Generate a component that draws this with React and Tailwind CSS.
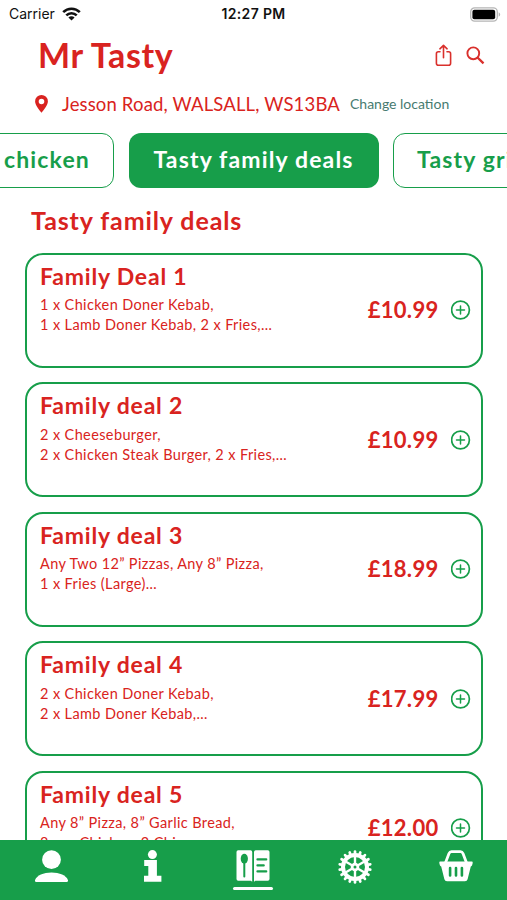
const categories = [
  { name: "chicken", className: "w-[230px] justify-end border border-[#179e4a] pr-[23px] text-[#179e4a]" },
  { name: "Tasty family deals", className: "w-[250px] justify-center bg-[#179e4a] text-white" },
  { name: "Tasty grills", className: "w-[180px] border border-[#179e4a] pl-[23px] text-[#179e4a]" },
];

const deals = [
  { name: "Family Deal 1", lines: ["1 x Chicken Doner Kebab,", "1 x Lamb Doner Kebab, 2 x Fries,…"], price: "£10.99" },
  { name: "Family deal 2", lines: ["2 x Cheeseburger,", "2 x Chicken Steak Burger, 2 x Fries,…"], price: "£10.99" },
  { name: "Family deal 3", lines: ["Any Two 12” Pizzas, Any 8” Pizza,", "1 x Fries (Large)…"], price: "£18.99" },
  { name: "Family deal 4", lines: ["2 x Chicken Doner Kebab,", "2 x Lamb Doner Kebab,…"], price: "£17.99" },
  { name: "Family deal 5", lines: ["Any 8” Pizza, 8” Garlic Bread,", "8 pcs Chicken, 2 Chips,…"], price: "£12.00" },
];

function WifiIcon() {
  return (
    <svg className="ml-[7px] h-[14px] w-[19px]" viewBox="0 0 19 14" fill="none" stroke="#111" strokeWidth="2.6">
      <path d="M1.2 5.2a11.8 11.8 0 0 1 16.6 0" />
      <path d="M4.3 8.4a7.4 7.4 0 0 1 10.4 0" />
      <path d="M9.5 13.6 6.4 10.5a4.4 4.4 0 0 1 6.2 0z" fill="#111" stroke="none" />
    </svg>
  );
}

function BatteryIcon() {
  return (
    <svg className="h-[15px] w-[31px]" viewBox="0 0 31 15">
      <rect x="0.7" y="0.9" width="26.6" height="13.2" rx="4" fill="#fff" stroke="#b5b5b5" strokeWidth="1.3" />
      <rect x="2.4" y="2.8" width="22.8" height="9.5" rx="2" fill="#000" />
      <path d="M28.7 5.3c2 .8 2 3.6 0 4.4z" fill="#b5b5b5" />
    </svg>
  );
}

function ShareIcon() {
  return (
    <svg className="h-[23px] w-[17px]" viewBox="0 0 17 23" fill="none" stroke="#d9302c" strokeWidth="1.6" strokeLinecap="round" strokeLinejoin="round">
      <path d="M5 7.800H3.400a2 2 0 0 0-2 2v9.400a2 2 0 0 0 2 2h10.200a2 2 0 0 0 2-2V9.800a2 2 0 0 0-2-2H12" />
      <path d="M8.5 13.7V1.6M4.900 4.800l3.600-3.400 3.600 3.400" />
    </svg>
  );
}

function SearchIcon() {
  return (
    <svg className="h-[19px] w-[19px]" viewBox="0 0 19 19" fill="none" stroke="#d9302c">
      <circle cx="7.3" cy="7.3" r="5.9" strokeWidth="1.9" />
      <path d="m11.5 11.5 6 5.8" strokeWidth="2.4" />
    </svg>
  );
}

function PinIcon() {
  return (
    <svg className="h-[18px] w-[13px]" viewBox="0 0 13 18">
      <path
        d="M6.5 0A6.4 6.4 0 0 0 .1 6.4C.1 9.5 4 14.6 6.5 17.8c2.5-3.2 6.4-8.3 6.4-11.4A6.4 6.4 0 0 0 6.5 0zm0 3.7a2.8 2.8 0 1 1 0 5.6 2.8 2.8 0 0 1 0-5.6z"
        fill="#d92320"
        fillRule="evenodd"
      />
    </svg>
  );
}

function PlusIcon() {
  return (
    <svg className="h-5 w-5" viewBox="0 0 20 20" fill="none" stroke="#179e4a" strokeLinecap="round">
      <circle cx="9.500" cy="10" r="8.900" strokeWidth="1.7" />
      <path d="M9.500 6v8M5.500 10h8" strokeWidth="1.5" />
    </svg>
  );
}

function UserIcon() {
  return (
    <svg className="h-[34px] w-[34px]" viewBox="0 0 34 34" fill="#fff">
      <circle cx="17.500" cy="9.700" r="9.400" />
      <path d="M1.100 29.900C2.700 25.500 9.500 22.500 17.500 22.500s14.800 3 16.400 7.400c.5 1.400-.4 2.200-1.600 2.200H2.700C1.500 32.100.600 31.300 1.100 29.900z" />
    </svg>
  );
}

function InfoIcon() {
  return (
    <svg className="h-[34px] w-[34px]" viewBox="0 0 34 34" fill="#fff">
      <circle cx="17.400" cy="4.600" r="4.500" />
      <path d="M9.200 10.100h12.700v15.600h4.500v6H9v-6h4.300v-9.600H9.200z" />
    </svg>
  );
}

function MenuIcon() {
  return (
    <svg className="h-[34px] w-[34px]" viewBox="0 0 34 34">
      <path d="M2.200.300h12.300a1.700 1.700 0 0 1 1.700 1.700v29.800l-1.400-1H2.200A1.700 1.700 0 0 1 .500 29.100V2A1.700 1.700 0 0 1 2.200.300z" fill="#fff" />
      <path d="M19.700.300h12.100a1.700 1.700 0 0 1 1.700 1.700v27.100a1.700 1.700 0 0 1-1.700 1.700H19.400l-1.400 1V2A1.700 1.700 0 0 1 19.700.300z" fill="#fff" />
      <ellipse cx="8.300" cy="8.700" rx="3.600" ry="5" fill="#179e4a" />
      <path d="M8.300 12v14.500" stroke="#179e4a" strokeWidth="2" strokeLinecap="round" />
      <path d="M21.500 9.400h8.700M21.500 15.400h6.200M21.500 21.400h8.700" stroke="#179e4a" strokeWidth="2.300" strokeLinecap="round" />
    </svg>
  );
}

function GearIcon() {
  const teeth = Array.from({ length: 18 }, (_, i) => i * 20);
  const spokes = [0, 60, 120, 180, 240, 300];
  return (
    <svg className="h-[34px] w-[34px]" viewBox="0 0 34 34" fill="none" stroke="#fff">
      <circle cx="17" cy="17" r="12" strokeWidth="4" />
      {teeth.map((a) => (
        <path key={a} d="M17 3.8V1.5" strokeWidth="2.7" strokeLinecap="round" transform={`rotate(${a} 17 17)`} />
      ))}
      {spokes.map((a) => (
        <path key={a} d="M17 14V6" strokeWidth="2.4" transform={`rotate(${a} 17 17)`} />
      ))}
      <circle cx="17" cy="17" r="2.9" strokeWidth="2.8" />
    </svg>
  );
}

function BasketIcon() {
  return (
    <svg className="h-[34px] w-[34px]" viewBox="0 0 34 34">
      <path d="M6.200 13.500 10 3.500Q10.800 1.600 12.500 1.600h9q1.700 0 2.500 1.900l3.800 10" fill="none" stroke="#fff" strokeWidth="2.800" />
      <path d="M1.300 11.600h31.400q1.300 0 1 1.300l-.600 2.300q-.300 1.100-1.300 1.300l-3.200 12.800q-.500 2-2.600 2H8q-2.100 0-2.600-2L2.200 16.500q-1-.200-1.300-1.300l-.600-2.300q-.300-1.300 1-1.300z" fill="#fff" />
      <path d="M11.100 18v7.500M17 18v7.500M22.900 18v7.500" stroke="#179e4a" strokeWidth="2.600" strokeLinecap="round" />
    </svg>
  );
}

const tabs = [
  { name: "account", icon: UserIcon },
  { name: "info", icon: InfoIcon },
  { name: "menu", icon: MenuIcon, active: true },
  { name: "settings", icon: GearIcon },
  { name: "basket", icon: BasketIcon },
];

function DealCard({ deal }) {
  return (
    <li className="flex h-[115px] shrink-0 justify-between rounded-[18px] border-2 border-[#179e4a] pr-[10px] pl-[13px]">
      <div className="pt-[7px]">
        <h3 className="text-[23px] leading-7 font-bold tracking-[0.8px] whitespace-nowrap">{deal.name}</h3>
        <div className="mt-[5.5px] text-[14.5px] leading-5 tracking-[0.38px]">
          {deal.lines.map((line) => (
            <p key={line} className="whitespace-nowrap">{line}</p>
          ))}
        </div>
      </div>
      <div className="flex items-center gap-3">
        <span className="text-[22px] leading-7 font-bold tracking-[0.3px]">{deal.price}</span>
        <PlusIcon />
      </div>
    </li>
  );
}

export default function App() {
  return (
    <div className="flex h-[900px] w-[507px] flex-col overflow-hidden bg-white font-['Lato','Open_Sans',sans-serif] text-[#d92320]">
      <div className="grid h-7 shrink-0 grid-cols-3 items-center pr-[6px] pl-[9px] font-['Inter',sans-serif] text-[#111]">
        <div className="flex items-center text-[14px] leading-5">
          Carrier
          <WifiIcon />
        </div>
        <div className="pr-[3px] text-center text-[14px] leading-5 font-semibold tracking-[0.35px]">12:27 PM</div>
        <div className="flex justify-end">
          <BatteryIcon />
        </div>
      </div>

      <header className="flex h-[46px] shrink-0 items-start justify-between pt-[7px] pr-[22px] pl-[38px]">
        <h1 className="text-[34px] leading-10 font-bold tracking-[0.6px] whitespace-nowrap">Mr Tasty</h1>
        <div className="flex items-center gap-[14px] pt-[9px]">
          <ShareIcon />
          <SearchIcon />
        </div>
      </header>

      <div className="mt-[18px] flex h-6 shrink-0 items-center pl-[35px] whitespace-nowrap">
        <PinIcon />
        <span className="ml-[14px] text-[18.5px] leading-6 tracking-[0.15px]">Jesson Road, WALSALL, WS13BA</span>
        <span className="ml-[10px] text-[14px] leading-6 text-[#477b70]">Change location</span>
      </div>

      <div className="mt-[17px] -ml-[116px] flex h-[55px] w-[800px] shrink-0 gap-[14.5px]">
        {categories.map((c) => (
          <div
            key={c.name}
            className={`flex shrink-0 items-center rounded-[12px] pb-[3px] text-[23px] leading-7 font-bold tracking-[1.15px] whitespace-nowrap ${c.className}`}
          >
            {c.name}
          </div>
        ))}
      </div>

      <h2 className="mt-[16px] shrink-0 pl-[31px] text-[25px] leading-8 font-bold tracking-[0.9px]">Tasty family deals</h2>

      <ul className="mt-[16.5px] flex min-h-0 flex-1 flex-col gap-[14.5px] overflow-hidden pr-[24.5px] pl-[25px]">
        {deals.map((deal) => (
          <DealCard key={deal.name} deal={deal} />
        ))}
      </ul>

      <nav className="grid h-[60px] shrink-0 grid-cols-5 bg-[#179e4a]">
        {tabs.map((tab) => (
          <div key={tab.name} className="flex flex-col items-center pt-[10px]">
            <tab.icon />
            {tab.active && <span className="mt-[3px] h-[3px] w-10 rounded-full bg-white" />}
          </div>
        ))}
      </nav>
    </div>
  );
}
